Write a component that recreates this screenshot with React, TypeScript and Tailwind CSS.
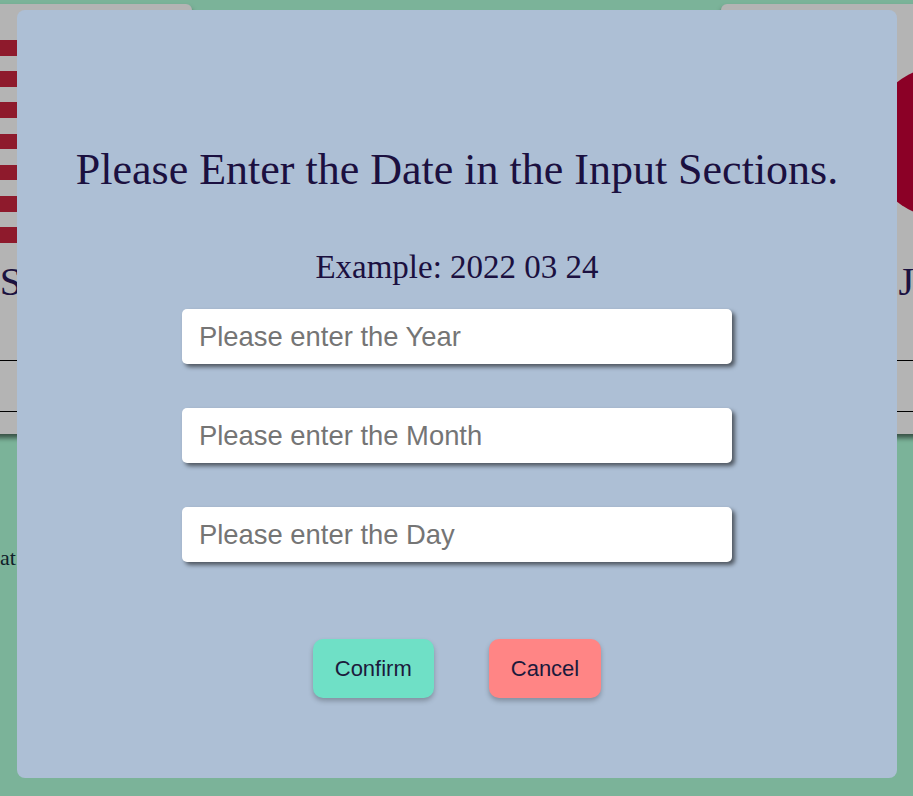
import React from 'react';

const serif = "font-['Liberation_Serif',serif]";
const sans = "font-['Liberation_Sans',Arial,sans-serif]";

// US flag: 13 stripes with the blue canton in the corner
const UsFlag = () => (
  <div className="relative flex h-[203px] w-[386px] flex-col">
    {Array.from({ length: 13 }).map((_, i) => (
      <div key={i} className={`flex-1 ${i % 2 === 0 ? 'bg-[#8e1a2c]' : 'bg-transparent'}`} />
    ))}
    <div className="absolute left-0 top-0 h-[109px] w-[154px] bg-[#2a2b4d]" />
  </div>
);

const JapanFlag = () => (
  <div className="flex h-[203px] w-[386px] items-center justify-center">
    <div className="h-[152px] w-[152px] rounded-full bg-[#8b0026]" />
  </div>
);

const CountryCard = ({ flag, name, width }: { flag: React.ReactNode; name: string; width: string }) => (
  <div className={`${width} h-[430px] shrink-0 rounded-md bg-[#b4b4b4] shadow-[0_4px_5px_rgba(0,0,0,0.55)] flex flex-col`}>
    <div className="flex justify-center pt-[36px]">{flag}</div>
    <h2 className={`${serif} mt-[19px] text-center text-[40px] leading-none text-[#1c1240]`}>{name}</h2>
    <div className="mt-[58px] h-[52px] border-y border-black" />
  </div>
);

export default function App() {
  return (
    <div className={`relative h-screen w-full overflow-hidden bg-[#7bb399] ${serif}`}>
      {/* Page behind the modal */}
      <div className="ml-[-216px] flex gap-[529px] pt-1">
        <CountryCard flag={<UsFlag />} name="United States" width="w-[408px]" />
        <CountryCard flag={<JapanFlag />} name="Japan" width="w-[446px]" />
      </div>
      <p className="mt-[113px] text-[22px] leading-none text-[#10202a]">at a glance</p>

      {/* Modal */}
      <div className="absolute inset-0 flex pb-[18px] pl-[17px] pr-[16px] pt-[10px]">
        <div className="flex flex-1 flex-col items-center rounded-lg bg-[#adbfd5] pt-[138px] text-[#1b1040]">
          <h1 className="text-[44px] leading-none">Please Enter the Date in the Input Sections.</h1>
          <p className="mt-[59px] text-[33px] leading-none">Example: 2022 03 24</p>

          <div className="mt-[25px] flex flex-col gap-[44px]">
            {['Year', 'Month', 'Day'].map((f) => (
              <input
                key={f}
                type="text"
                placeholder={`Please enter the ${f}`}
                className={`${sans} h-[55px] w-[550px] rounded-[5px] bg-white px-[17px] text-[27.4px] text-[#1c1240] outline-none shadow-[3px_3px_4px_rgba(0,0,0,0.55)] placeholder:text-[#757575]`}
              />
            ))}
          </div>

          <div className="mt-[77px] flex gap-[55px]">
            <button className={`${sans} h-[59px] rounded-[10px] bg-[#6fe0c6] px-[22px] text-[22px] text-[#1c1a3c] shadow-[0_3px_5px_rgba(0,0,0,0.25)]`}>
              Confirm
            </button>
            <button className={`${sans} h-[59px] rounded-[10px] bg-[#ff8585] px-[22px] text-[22px] text-[#1c1a3c] shadow-[0_3px_5px_rgba(0,0,0,0.25)]`}>
              Cancel
            </button>
          </div>
        </div>
      </div>
    </div>
  );
}
